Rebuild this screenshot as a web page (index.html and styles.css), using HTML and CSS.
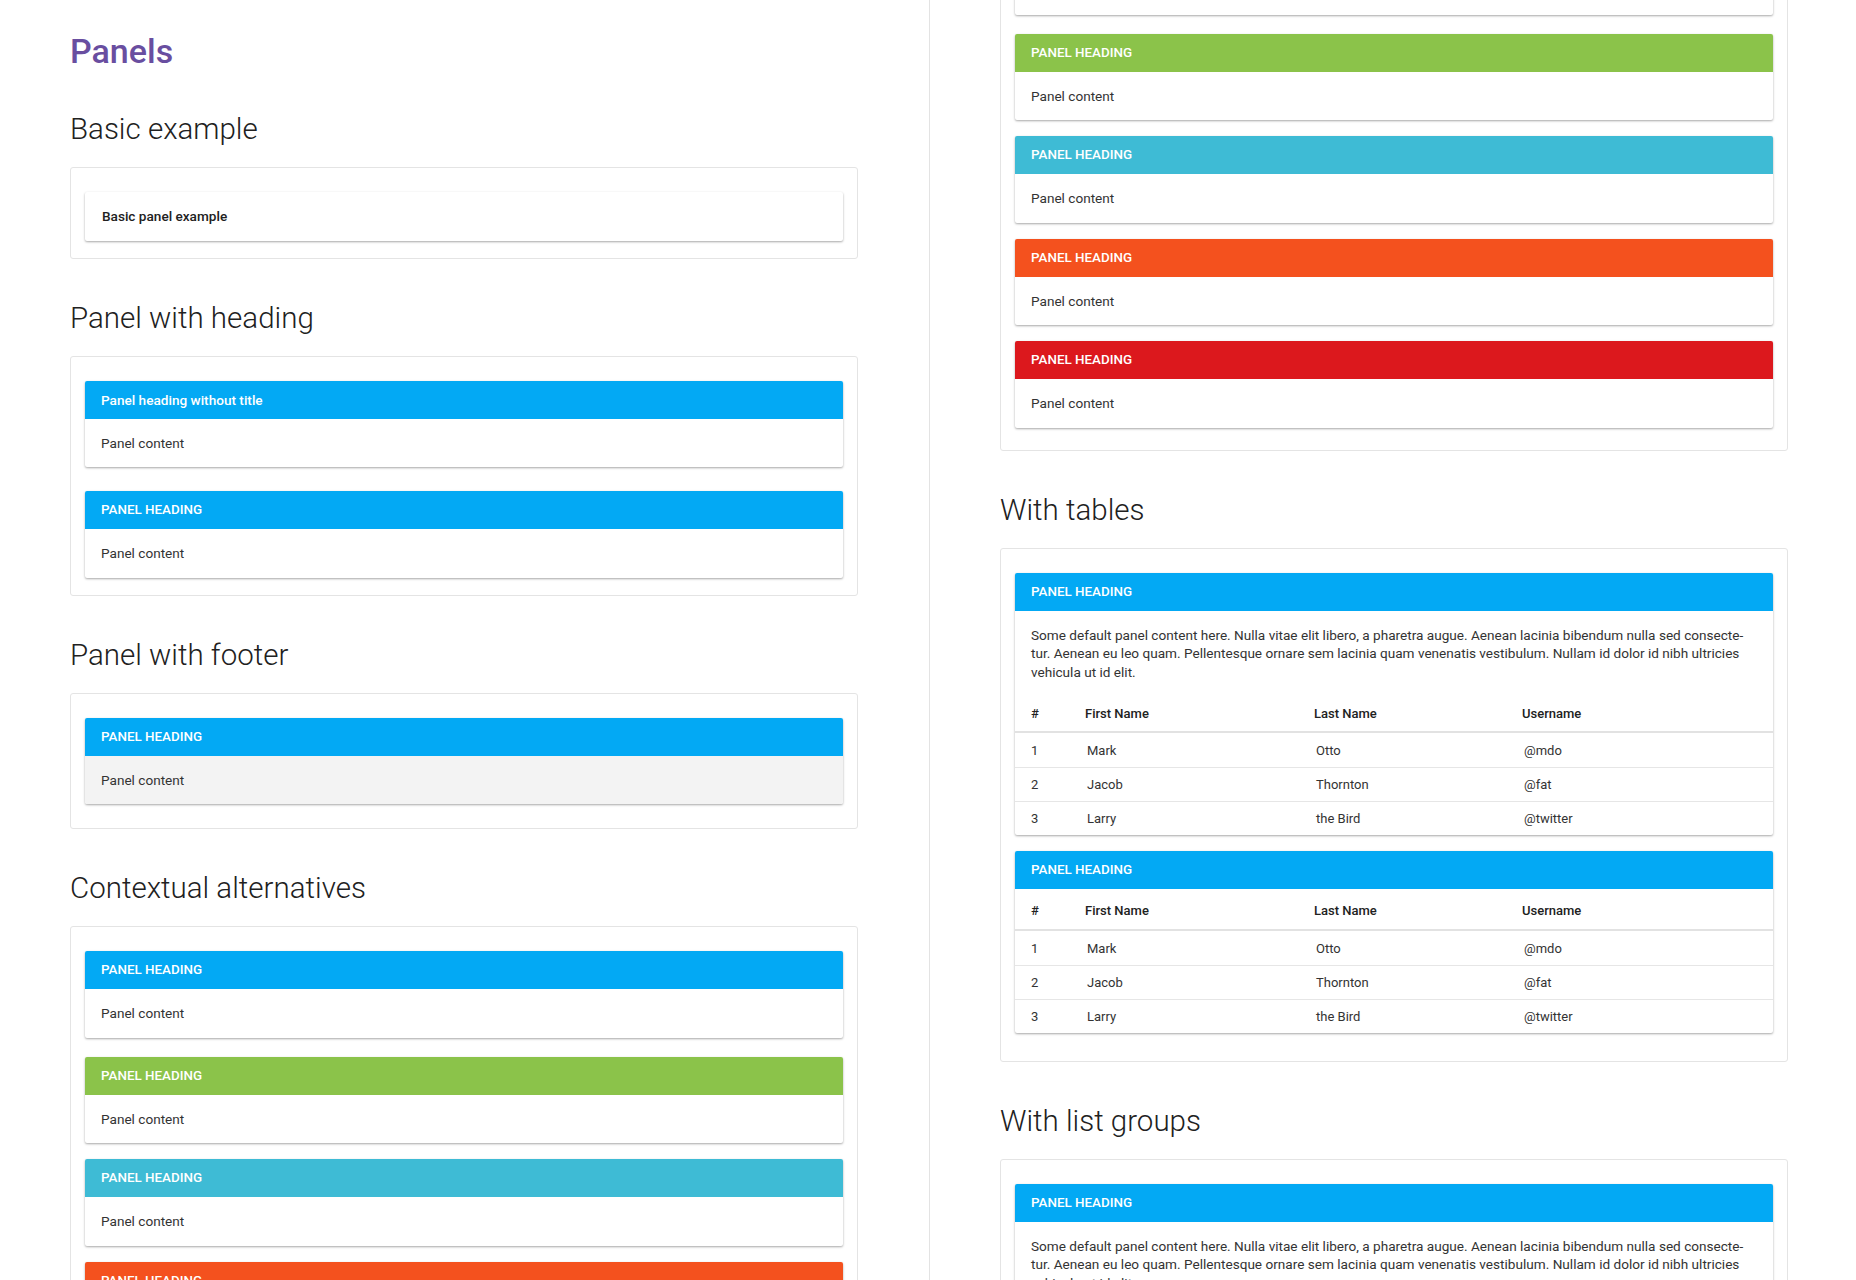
FILE: index.html
```html
<!DOCTYPE html>
<html lang="en">
<head>
    <meta charset="UTF-8">
    <title>Panels</title>
    <link rel="stylesheet" href="styles.css">
</head>
<body>
<div class="spread">

    <!-- Page, top -->
    <div class="pane">
        <h1 class="page-title">Panels</h1>

        <h2 class="section-title">Basic example</h2>
        <div class="demo demo-sm">
            <div class="panel">
                <div class="panel-body basic">Basic panel example</div>
            </div>
        </div>

        <h2 class="section-title">Panel with heading</h2>
        <div class="demo demo-sm demo-spaced">
            <div class="panel">
                <div class="panel-heading primary">Panel heading without title</div>
                <div class="panel-body">Panel content</div>
            </div>
            <div class="panel">
                <div class="panel-heading primary"><h3 class="panel-title">Panel heading</h3></div>
                <div class="panel-body">Panel content</div>
            </div>
        </div>

        <h2 class="section-title">Panel with footer</h2>
        <div class="demo demo-md">
            <div class="panel">
                <div class="panel-heading primary"><h3 class="panel-title">Panel heading</h3></div>
                <div class="panel-footer">Panel content</div>
            </div>
        </div>

        <h2 class="section-title">Contextual alternatives</h2>
        <div class="demo demo-context">
            <div class="panel">
                <div class="panel-heading primary"><h3 class="panel-title">Panel heading</h3></div>
                <div class="panel-body">Panel content</div>
            </div>
            <div class="panel">
                <div class="panel-heading success"><h3 class="panel-title">Panel heading</h3></div>
                <div class="panel-body">Panel content</div>
            </div>
            <div class="panel">
                <div class="panel-heading info"><h3 class="panel-title">Panel heading</h3></div>
                <div class="panel-body">Panel content</div>
            </div>
            <div class="panel">
                <div class="panel-heading warning"><h3 class="panel-title">Panel heading</h3></div>
                <div class="panel-body">Panel content</div>
            </div>
            <div class="panel">
                <div class="panel-heading danger"><h3 class="panel-title">Panel heading</h3></div>
                <div class="panel-body">Panel content</div>
            </div>
        </div>
    </div>

    <!-- Same page, scrolled down -->
    <div class="pane pane-scrolled">
        <div class="demo demo-context scrolled-card">
            <div class="panel">
                <div class="panel-heading primary"><h3 class="panel-title">Panel heading</h3></div>
                <div class="panel-body">Panel content</div>
            </div>
            <div class="panel">
                <div class="panel-heading success"><h3 class="panel-title">Panel heading</h3></div>
                <div class="panel-body">Panel content</div>
            </div>
            <div class="panel">
                <div class="panel-heading info"><h3 class="panel-title">Panel heading</h3></div>
                <div class="panel-body">Panel content</div>
            </div>
            <div class="panel">
                <div class="panel-heading warning"><h3 class="panel-title">Panel heading</h3></div>
                <div class="panel-body">Panel content</div>
            </div>
            <div class="panel">
                <div class="panel-heading danger"><h3 class="panel-title">Panel heading</h3></div>
                <div class="panel-body">Panel content</div>
            </div>
        </div>

        <h2 class="section-title">With tables</h2>
        <div class="demo demo-lg">
            <div class="panel">
                <div class="panel-heading primary"><h3 class="panel-title">Panel heading</h3></div>
                <div class="panel-body">
                    <p>Some default panel content here. Nulla vitae elit libero, a pharetra augue. Aenean lacinia bibendum nulla sed consecte&shy;tur. Aenean eu leo quam. Pellentesque ornare sem lacinia quam venenatis vestibulum. Nullam id dolor id nibh ultricies vehicula ut id elit.</p>
                </div>
                <table class="table">
                    <colgroup><col class="col-num"><col class="col-first"><col class="col-last"><col></colgroup>
                    <thead>
                        <tr><th>#</th><th>First Name</th><th>Last Name</th><th>Username</th></tr>
                    </thead>
                    <tbody>
                        <tr><td>1</td><td>Mark</td><td>Otto</td><td>@mdo</td></tr>
                        <tr><td>2</td><td>Jacob</td><td>Thornton</td><td>@fat</td></tr>
                        <tr><td>3</td><td>Larry</td><td>the Bird</td><td>@twitter</td></tr>
                    </tbody>
                </table>
            </div>
            <div class="panel">
                <div class="panel-heading primary"><h3 class="panel-title">Panel heading</h3></div>
                <table class="table table-top">
                    <colgroup><col class="col-num"><col class="col-first"><col class="col-last"><col></colgroup>
                    <thead>
                        <tr><th>#</th><th>First Name</th><th>Last Name</th><th>Username</th></tr>
                    </thead>
                    <tbody>
                        <tr><td>1</td><td>Mark</td><td>Otto</td><td>@mdo</td></tr>
                        <tr><td>2</td><td>Jacob</td><td>Thornton</td><td>@fat</td></tr>
                        <tr><td>3</td><td>Larry</td><td>the Bird</td><td>@twitter</td></tr>
                    </tbody>
                </table>
            </div>
        </div>

        <h2 class="section-title">With list groups</h2>
        <div class="demo">
            <div class="panel">
                <div class="panel-heading primary"><h3 class="panel-title">Panel heading</h3></div>
                <div class="panel-body">
                    <p>Some default panel content here. Nulla vitae elit libero, a pharetra augue. Aenean lacinia bibendum nulla sed consecte&shy;tur. Aenean eu leo quam. Pellentesque ornare sem lacinia quam venenatis vestibulum. Nullam id dolor id nibh ultricies vehicula ut id elit.</p>
                </div>
                <ul class="list-group">
                    <li>Cras justo odio</li>
                    <li>Dapibus ac facilisis in</li>
                    <li>Morbi leo risus</li>
                </ul>
            </div>
        </div>
    </div>

</div>
</body>
</html>
```

FILE: styles.css
```css
body {
    margin: 0;
    background: #ffffff;
    color: #333333;
    font-family: Roboto, "Noto Sans", Arial, sans-serif;
    font-size: 13px;
    line-height: 1.428571;
}

.spread {
    display: flex;
    height: 1280px;
    overflow: hidden;
}

.pane {
    flex: none;
    width: 929px;
    height: 1280px;
    padding: 32px 71px 0 70px;
    box-sizing: border-box;
    overflow: hidden;
}

.pane-scrolled {
    width: 927px;
    padding: 0 68px 0 70px;
    border-left: 1px solid #e3e3e3;
}

.page-title {
    margin: 0;
    font-size: 34px;
    line-height: 38px;
    font-weight: 500;
    color: #694ea0;
}

.section-title {
    margin: 42px 0 21px 0;
    font-size: 29.5px;
    line-height: 34px;
    font-weight: 300;
    color: #212121;
}

/* cadre gris autour de chaque exemple */
.demo {
    border: 1px solid #e4e4e4;
    border-radius: 3px;
    padding: 24px 14px 22px 14px;
}
.demo-sm { padding-bottom: 17px; }
.demo-md { padding-bottom: 24px; }
.demo-lg { padding-bottom: 28px; }

.scrolled-card {
    margin-top: -97px;
}

.panel {
    background: #ffffff;
    border-radius: 2px;
    margin-bottom: 16px;
    overflow: hidden;
    box-shadow: 0 1px 3px rgba(0, 0, 0, 0.12), 0 1px 2px rgba(0, 0, 0, 0.24);
}
.demo-spaced .panel { margin-bottom: 24px; }
.demo-context .panel:first-child { margin-bottom: 19px; }
.panel:last-child { margin-bottom: 0; }

.panel-heading {
    padding: 9px 16px;
    font-size: 13.6px;
    line-height: 20px;
    font-weight: 500;
    color: #ffffff;
}
.panel-title {
    margin: 0;
    font-size: 13.4px;
    line-height: 20px;
    font-weight: 500;
    text-transform: uppercase;
}
.primary { background: #03a9f4; }
.success { background: #8bc34a; }
.info { background: #3ebbd5; }
.warning { background: #f4511e; }
.danger { background: #dc181d; }

.panel-body,
.panel-footer {
    padding: 15px 16px;
    font-size: 13.6px;
    line-height: 18.57px;
}
.panel-body.basic {
    padding-left: 17px;
    font-weight: 500;
    color: #212121;
}
.panel-footer {
    background: #f3f3f3;
}
.panel-body p {
    margin: 0 8px 0 0;
    hyphens: manual;
}

.table {
    width: 100%;
    table-layout: fixed;
    border-collapse: separate;
    border-spacing: 0;
}
.col-num { width: 62px; }
.col-first { width: 229px; }
.col-last { width: 208px; }
.table th {
    padding: 8px 8px 8px 8px;
    text-align: left;
    font-weight: 500;
    color: #212121;
    border-bottom: 2px solid #e2e2e2;
}
.table-top th { padding-top: 13px; }
.table td {
    padding: 7px 8px 7px 10px;
    line-height: 19px;
}
.table tbody tr:first-child td { padding-top: 8px; }
.table tr + tr td { border-top: 1px solid #e6e6e6; }
.table th:first-child,
.table td:first-child { padding-left: 16px; }

.list-group {
    list-style: none;
    margin: 0;
    padding: 0;
}
.list-group li {
    padding: 10px 16px;
    border-top: 1px solid #e6e6e6;
}
```
